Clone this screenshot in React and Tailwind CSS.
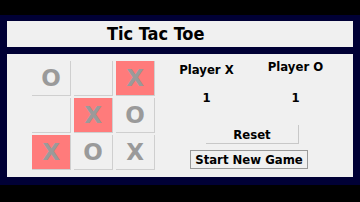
import React from 'react'

const CELLS = [
  { v: 'O', hot: false }, { v: '', hot: false }, { v: 'X', hot: true },
  { v: '', hot: false }, { v: 'X', hot: true }, { v: 'O', hot: false },
  { v: 'X', hot: true }, { v: 'O', hot: false }, { v: 'X', hot: false },
]

export default function App() {
  return (
    <div className="w-[360px] h-[202px] bg-black pt-[15px]" style={{ fontFamily: '"DejaVu Sans Condensed", "DejaVu Sans", sans-serif' }}>
      <div className="h-[170px] bg-[#000035] px-[7px] pt-[6px]">
        {/* Title */}
        <div className="h-[26px] bg-[#f0f0f0] pl-[100px] flex items-center">
          <span className="text-[18px] font-bold text-black leading-none">Tic Tac Toe</span>
        </div>

        {/* Main */}
        <div className="mt-[7px] h-[123px] bg-[#f0f0f0] flex">
          {/* Board */}
          <div className="pl-[25px] pt-[7px] grid grid-cols-[39px_39px_39px] grid-rows-[35px_35px_35px] gap-x-[3px] gap-y-[2px]">
            {CELLS.map((c, i) => (
              <div key={i}
                className={`flex items-center justify-center border-r border-b border-[#cfcfcf] font-['DejaVu_Sans',sans-serif] text-[23px] font-bold text-[#9a9a9a] ${c.hot ? 'bg-[#ff7b7b]' : 'bg-[#f0f0f0]'}`}>
                {c.v}
              </div>
            ))}
          </div>

          {/* Scores & buttons */}
          <div className="ml-[7px] w-[178px] flex flex-col items-center pt-[5px] text-[13px] font-bold text-black">
            <div className="w-full grid grid-cols-2">
              <div className="flex flex-col items-center">
                <span className="mt-[3px] leading-[16px]">Player X</span>
                <span className="mt-[12px] leading-[16px]">1</span>
              </div>
              <div className="flex flex-col items-center">
                <span className="leading-[16px]">Player O</span>
                <span className="mt-[15px] leading-[16px]">1</span>
              </div>
            </div>
            <button className="mt-[19px] ml-[3px] w-[93px] h-[19px] bg-[#f0f0f0] border-r border-b border-[#c8c8c8] leading-none">Reset</button>
            <button className="mt-[6px] ml-[-4px] w-[118px] h-[19px] bg-[#f0f0f0] border border-[#9a9a9a] leading-none whitespace-nowrap">Start New Game</button>
          </div>
        </div>
      </div>
    </div>
  )
}
